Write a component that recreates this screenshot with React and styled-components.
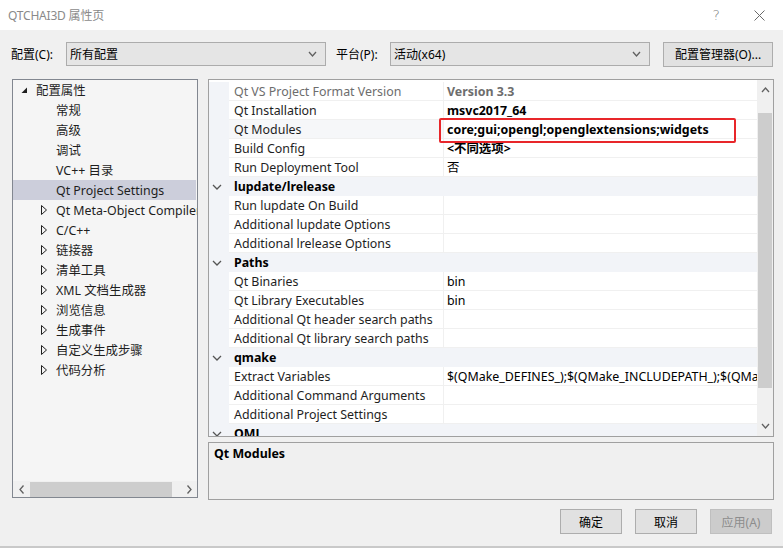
import styled, { createGlobalStyle } from 'styled-components';

const GlobalStyle = createGlobalStyle`
  html, body {
    margin: 0;
    padding: 0;
    background: #f0f0f0;
  }
  body {
    font-family: "Noto Sans", "Noto Sans CJK SC", sans-serif;
    font-size: 12.4px;
    color: #1e1e1e;
  }
  * { box-sizing: border-box; }
`;

const Window = styled.div`
  width: 783px;
  height: 548px;
  display: flex;
  flex-direction: column;
  background: #f0f0f0;
  border-bottom: 2px solid #c9c9c9;
  overflow: hidden;
`;

const TitleBar = styled.div`
  height: 30px;
  flex: none;
  display: flex;
  align-items: center;
  justify-content: space-between;
  background: #fff;
  padding: 0 18px 0 8px;
`;

const Title = styled.span`
  color: #8a8a8a;
  font-size: 12px;
  letter-spacing: -0.2px;
`;

const TitleControls = styled.div`
  display: flex;
  align-items: center;
  gap: 34px;
  color: #7a7a7a;
`;

const HelpMark = styled.span`
  font-size: 14px;
  font-family: "DejaVu Sans", sans-serif;
  font-weight: 300;
`;

const ConfigRow = styled.div`
  display: flex;
  align-items: center;
  height: 24px;
  margin-top: 12px;
  padding-left: 11px;
  font-size: 12px;
`;

const FieldLabel = styled.span`
  width: ${({ $w }) => $w}px;
  margin-left: ${({ $ml }) => $ml || 0}px;
  flex: none;
  color: #000;
`;

const Select = styled.div`
  width: 260px;
  height: 24px;
  display: flex;
  align-items: center;
  justify-content: space-between;
  padding: 0 8px 0 3px;
  background: #e5e5e5;
  border: 1px solid #acacac;
  color: #000;
`;

const PushButton = styled.div`
  width: ${({ $w }) => $w || 62}px;
  height: 25px;
  margin-left: ${({ $ml }) => $ml || 0}px;
  display: flex;
  align-items: center;
  justify-content: center;
  font-size: 12px;
  background: ${({ $disabled }) => ($disabled ? '#cccccc' : '#e1e1e1')};
  border: 1px solid ${({ $disabled }) => ($disabled ? '#bfbfbf' : '#adadad')};
  color: ${({ $disabled }) => ($disabled ? '#8d8d8d' : '#000')};
  flex: none;
`;

const Main = styled.div`
  display: flex;
  margin-top: 13px;
  padding-left: 12px;
  gap: 10px;
`;

const TreePanel = styled.div`
  width: 186px;
  height: 419px;
  display: flex;
  flex-direction: column;
  background: #f5f5f5;
  border: 1px solid #828790;
`;

const TreeList = styled.div`
  flex: 1;
  overflow: hidden;
`;

const TreeItem = styled.div`
  height: 20px;
  display: flex;
  align-items: center;
  white-space: nowrap;
  padding-left: ${({ $level }) => ($level === 0 ? 8 : 28)}px;
  background: ${({ $selected }) => ($selected ? '#cccedb' : 'transparent')};
  margin-right: ${({ $selected }) => ($selected ? 1 : 0)}px;
  color: #1e1e1e;
`;

const Toggle = styled.span`
  width: 15px;
  flex: none;
  display: flex;
  align-items: center;
`;

const HScroll = styled.div`
  height: 17px;
  flex: none;
  display: flex;
  align-items: center;
  background: #f0f0f0;
  border-top: 1px solid #f5f5f5;
`;

const ScrollArrow = styled.div`
  width: ${({ $w }) => $w || 17}px;
  height: ${({ $h }) => $h || 17}px;
  flex: none;
  display: flex;
  align-items: center;
  justify-content: center;
`;

const HThumb = styled.div`
  flex: 1;
  height: 15px;
  margin-right: 8px;
  background: #cdcdcd;
`;

const RightColumn = styled.div`
  width: 566px;
  display: flex;
  flex-direction: column;
  gap: 5px;
`;

const GridFrame = styled.div`
  position: relative;
  height: 358px;
  display: flex;
  background: #fff;
  border: 1px solid #a0a0a0;
`;

const GridBody = styled.div`
  flex: 1;
  overflow: hidden;
  padding-top: 2px;
`;

const Row = styled.div`
  display: grid;
  grid-template-columns: 20px 215px 1fr;
  height: 19px;
  background: ${({ $category }) => ($category ? '#f2f4f8' : '#fff')};
`;

const MarginCell = styled.div`
  background: #f2f4f8;
  display: flex;
  align-items: center;
  justify-content: center;
  padding-right: 4px;
`;

const NameCell = styled.div`
  padding-left: 5px;
  line-height: 20px;
  white-space: nowrap;
  overflow: hidden;
  border-right: 1px solid #f0f0f0;
  border-bottom: 1px solid #f0f0f0;
  background: ${({ $active }) => ($active ? '#f6f7f9' : 'transparent')};
  color: ${({ $readOnly }) => ($readOnly ? '#6d6d6d' : '#1e1e1e')};
`;

const ValueCell = styled.div`
  padding-left: 3px;
  line-height: 20px;
  white-space: nowrap;
  overflow: hidden;
  border-bottom: 1px solid #f0f0f0;
  font-weight: ${({ $bold }) => ($bold ? 700 : 400)};
  color: ${({ $readOnly }) => ($readOnly ? '#6d6d6d' : '#000')};
`;

const CategoryName = styled.div`
  grid-column: 2 / 4;
  padding-left: 5px;
  line-height: 20px;
  overflow: hidden;
  font-weight: 700;
  color: #000;
`;

const VScroll = styled.div`
  width: 16px;
  flex: none;
  display: flex;
  flex-direction: column;
  background: #f0f0f0;
`;

const VTrack = styled.div`
  flex: 1;
  padding: 0 1px;
`;

const VThumb = styled.div`
  background: #cdcdcd;
`;

const Highlight = styled.div`
  position: absolute;
  left: 230px;
  top: 38px;
  width: 297px;
  height: 25px;
  border: 2px solid #e8262a;
  border-radius: 2px;
  pointer-events: none;
`;

const DescPanel = styled.div`
  height: 58px;
  border: 1px solid #a0a0a0;
  padding: 2px 5px;
  background: #f0f0f0;
`;

const DescTitle = styled.div`
  font-weight: 700;
  color: #000;
`;

const Footer = styled.div`
  display: flex;
  justify-content: flex-end;
  gap: 13px;
  margin-top: 9px;
  padding-right: 11px;
`;

const Chevron = ({ w = 7, h = 4, color = '#606060', up = false }) => (
  <svg width={w + 2} height={h + 2} viewBox={`-1 -1 ${w + 2} ${h + 2}`}>
    <polyline
      points={up ? `0,${h} ${w / 2},0 ${w},${h}` : `0,0 ${w / 2},${h} ${w},0`}
      fill="none"
      stroke={color}
      strokeWidth="1.3"
    />
  </svg>
);

const SideArrow = ({ left = false }) => (
  <svg width="6" height="9" viewBox="0 0 6 9">
    <polyline
      points={left ? '4.5,0.5 1,4.5 4.5,8.5' : '1.5,0.5 5,4.5 1.5,8.5'}
      fill="none"
      stroke="#606060"
      strokeWidth="1.3"
    />
  </svg>
);

const Expanded = () => (
  <svg width="7" height="7" viewBox="0 0 7 7">
    <polygon points="6,0.5 6,6 0.5,6" fill="#1e1e1e" />
  </svg>
);

const Collapsed = () => (
  <svg width="6" height="10" viewBox="0 0 6 10">
    <polygon points="0.5,0.5 5.5,5 0.5,9.5" fill="none" stroke="#1e1e1e" strokeWidth="1" />
  </svg>
);

const treeItems = [
  { label: '配置属性', level: 0, toggle: 'open' },
  { label: '常规', level: 1 },
  { label: '高级', level: 1 },
  { label: '调试', level: 1 },
  { label: 'VC++ 目录', level: 1 },
  { label: 'Qt Project Settings', level: 1, selected: true },
  { label: 'Qt Meta-Object Compiler', level: 1, toggle: 'closed' },
  { label: 'C/C++', level: 1, toggle: 'closed' },
  { label: '链接器', level: 1, toggle: 'closed' },
  { label: '清单工具', level: 1, toggle: 'closed' },
  { label: 'XML 文档生成器', level: 1, toggle: 'closed' },
  { label: '浏览信息', level: 1, toggle: 'closed' },
  { label: '生成事件', level: 1, toggle: 'closed' },
  { label: '自定义生成步骤', level: 1, toggle: 'closed' },
  { label: '代码分析', level: 1, toggle: 'closed' },
];

const gridRows = [
  { name: 'Qt VS Project Format Version', value: 'Version 3.3', bold: true, readOnly: true },
  { name: 'Qt Installation', value: 'msvc2017_64', bold: true },
  { name: 'Qt Modules', value: 'core;gui;opengl;openglextensions;widgets', bold: true, active: true },
  { name: 'Build Config', value: '<不同选项>', bold: true },
  { name: 'Run Deployment Tool', value: '否' },
  { category: 'lupdate/lrelease' },
  { name: 'Run lupdate On Build' },
  { name: 'Additional lupdate Options' },
  { name: 'Additional lrelease Options' },
  { category: 'Paths' },
  { name: 'Qt Binaries', value: 'bin' },
  { name: 'Qt Library Executables', value: 'bin' },
  { name: 'Additional Qt header search paths' },
  { name: 'Additional Qt library search paths' },
  { category: 'qmake' },
  { name: 'Extract Variables', value: '$(QMake_DEFINES_);$(QMake_INCLUDEPATH_);$(QMake_LIBS_)' },
  { name: 'Additional Command Arguments' },
  { name: 'Additional Project Settings' },
  { category: 'QML' },
];

export default function App() {
  return (
    <>
      <GlobalStyle />
      <Window>
        <TitleBar>
          <Title>QTCHAI3D 属性页</Title>
          <TitleControls>
            <HelpMark>?</HelpMark>
            <svg width="11" height="11" viewBox="0 0 11 11">
              <path d="M0.5 0.5 L10.5 10.5 M10.5 0.5 L0.5 10.5" stroke="#6a6a6a" strokeWidth="1" />
            </svg>
          </TitleControls>
        </TitleBar>

        <ConfigRow>
          <FieldLabel $w={55}>配置(C):</FieldLabel>
          <Select>
            <span>所有配置</span>
            <Chevron />
          </Select>
          <FieldLabel $w={54} $ml={10}>平台(P):</FieldLabel>
          <Select>
            <span>活动(x64)</span>
            <Chevron />
          </Select>
          <PushButton $w={110} $ml={13}>配置管理器(O)...</PushButton>
        </ConfigRow>

        <Main>
          <TreePanel>
            <TreeList>
              {treeItems.map((item) => (
                <TreeItem key={item.label} $level={item.level} $selected={item.selected}>
                  <Toggle>
                    {item.toggle === 'open' && <Expanded />}
                    {item.toggle === 'closed' && <Collapsed />}
                  </Toggle>
                  {item.label}
                </TreeItem>
              ))}
            </TreeList>
            <HScroll>
              <ScrollArrow><SideArrow left /></ScrollArrow>
              <HThumb />
              <ScrollArrow><SideArrow /></ScrollArrow>
            </HScroll>
          </TreePanel>

          <RightColumn>
            <GridFrame>
              <GridBody>
                {gridRows.map((row) =>
                  row.category ? (
                    <Row key={row.category} $category>
                      <MarginCell>
                        <Chevron w={8} h={4} color="#555" />
                      </MarginCell>
                      <CategoryName>{row.category}</CategoryName>
                    </Row>
                  ) : (
                    <Row key={row.name}>
                      <MarginCell />
                      <NameCell $readOnly={row.readOnly} $active={row.active}>{row.name}</NameCell>
                      <ValueCell $bold={row.bold} $readOnly={row.readOnly}>{row.value}</ValueCell>
                    </Row>
                  )
                )}
              </GridBody>
              <VScroll>
                <ScrollArrow $w={16} $h={20}><Chevron w={7} h={4} color="#606060" up /></ScrollArrow>
                <VTrack>
                  <VThumb style={{ marginTop: 13, height: 275 }} />
                </VTrack>
                <ScrollArrow $w={16} $h={20}><Chevron w={7} h={4} color="#606060" /></ScrollArrow>
              </VScroll>
              <Highlight />
            </GridFrame>
            <DescPanel>
              <DescTitle>Qt Modules</DescTitle>
            </DescPanel>
          </RightColumn>
        </Main>

        <Footer>
          <PushButton>确定</PushButton>
          <PushButton>取消</PushButton>
          <PushButton $disabled>应用(A)</PushButton>
        </Footer>
      </Window>
    </>
  );
}
